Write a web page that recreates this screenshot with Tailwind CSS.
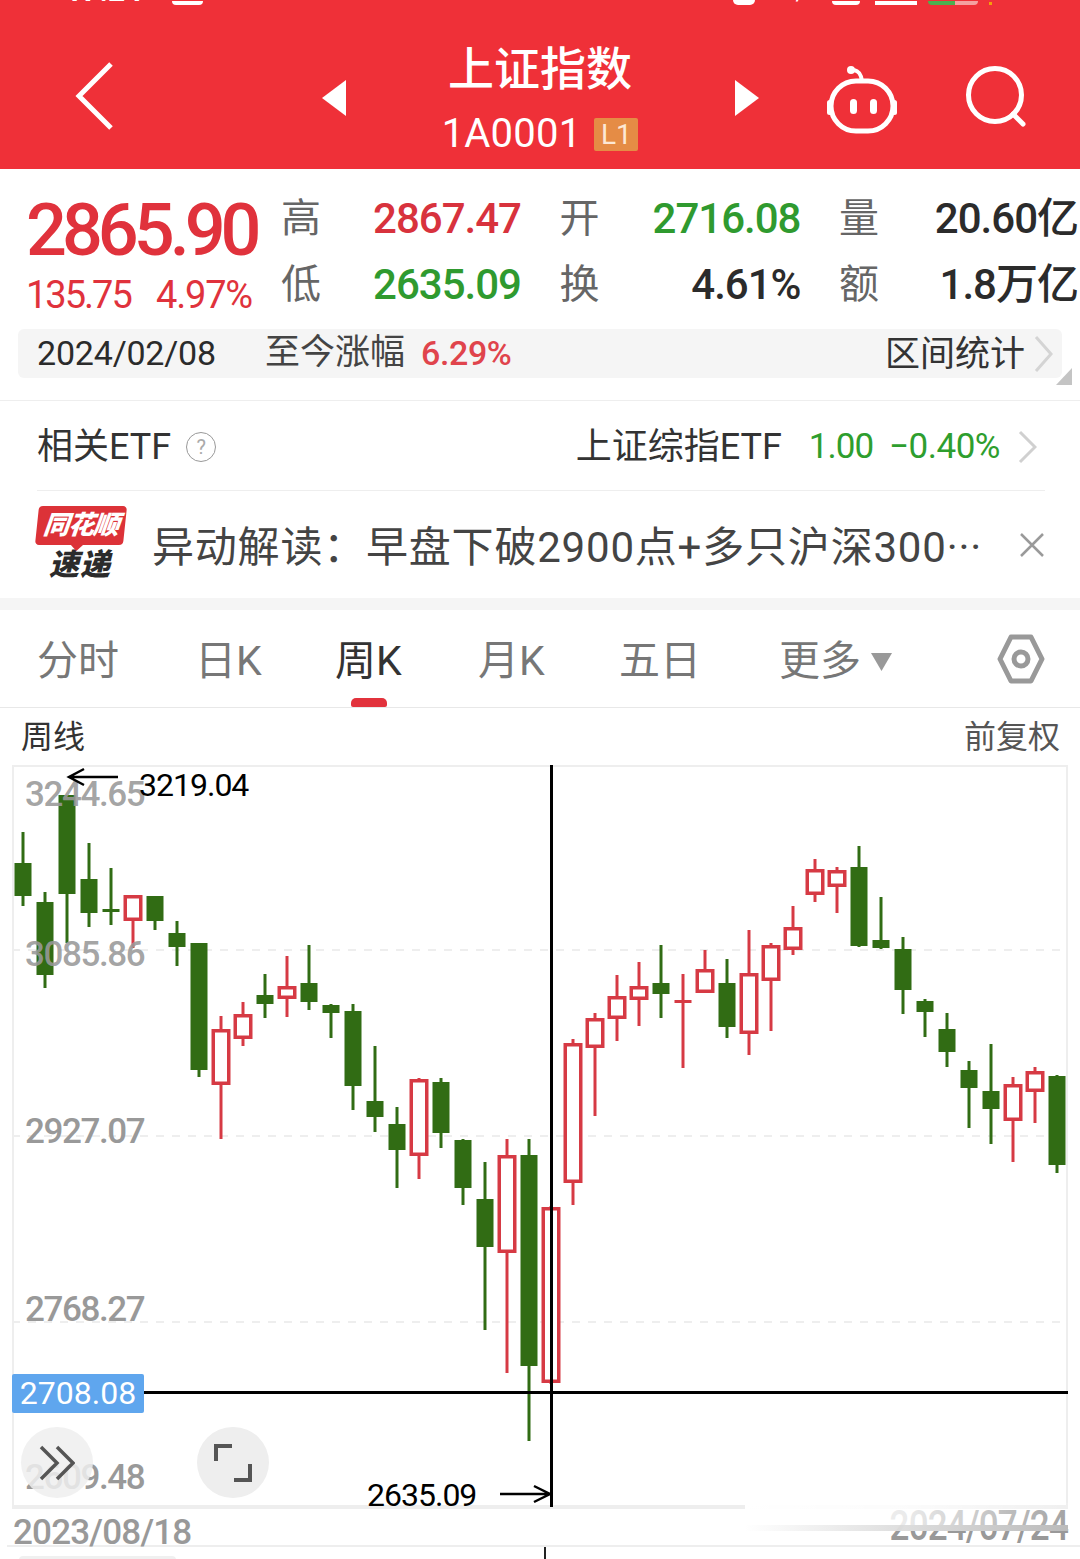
<!DOCTYPE html>
<html lang="zh-CN">
<head>
    <meta charset="UTF-8">
    <meta name="viewport" content="width=device-width, initial-scale=1.0">
    <title>上证指数</title>
    <script src="https://cdn.jsdelivr.net/npm/@tailwindcss/browser@4"></script>
</head>
<body class="bg-white font-['Roboto','Noto_Sans_CJK_SC',sans-serif] w-[1080px] h-[1559px] overflow-hidden">
    <!-- Header -->
    <header class="h-[169px] bg-[#ef3038] text-white relative overflow-hidden">
        <!-- status bar, cut off by the crop -->
        <div class="flex items-end h-[5px] overflow-hidden">
            <div class="ml-[65px] w-[100px] h-[5px] overflow-hidden"><span class="block -mt-[24px] text-[30px] leading-[30px] font-bold">17:24</span></div>
            <div class="ml-[7px] w-[31px] h-[4px] bg-white rounded-b-md"></div>
            <div class="ml-[530px] w-[22px] h-[5px] bg-white rounded-b-full"></div>
            <div class="ml-[18px] w-[44px] h-[5px] overflow-hidden"><span class="block -mt-[15px] text-[18px] leading-[18px] font-bold">KB/s</span></div>
            <div class="ml-[15px] w-[28px] h-[4px] bg-white rounded-b-md"></div>
            <div class="ml-[15px] w-[42px] h-[4px] bg-white"></div>
            <div class="ml-[11px] w-[50px] h-[4px] flex overflow-hidden rounded-b-sm"><div class="w-[27px] bg-[#4caf50]"></div><div class="flex-1 bg-[#f4a0a0]"></div></div>
            <div class="ml-[11px] w-[3px] h-[3px] bg-[#f59e0b]"></div>
        </div>
        <nav class="flex items-start h-[164px]">
            <svg class="ml-[75px] mt-[56px] shrink-0" width="40" height="72" viewBox="0 0 40 72" fill="none" stroke="white" stroke-width="5"><path d="M36 3 4 35 36 67"/></svg>
            <svg class="ml-[207px] mt-[75px] shrink-0" width="24" height="36" viewBox="0 0 24 36" fill="white"><path d="M24 0V36L0 18Z"/></svg>
            <div class="ml-[94px] w-[200px] shrink-0 flex flex-col items-center">
                <div class="text-[46px] leading-[50px] mt-[39px] font-medium">上证指数</div>
                <div class="flex items-center mt-[23px] h-[34px]">
                    <span class="text-[40px] leading-[34px] tracking-[0.2px]">1A0001</span>
                    <span class="ml-[13px] w-[44px] h-[33px] bg-[#e58c45] rounded-[2px] text-[28px] leading-[33px] text-center text-[#fde8d4]">L1</span>
                </div>
            </div>
            <svg class="ml-[95px] mt-[75px] shrink-0" width="24" height="36" viewBox="0 0 24 36" fill="white"><path d="M0 0V36L24 18Z"/></svg>
            <svg class="ml-[66px] mt-[55px] shrink-0" width="74" height="78" viewBox="0 0 74 78" fill="none" stroke="white" stroke-width="5">
                <circle cx="26" cy="10" r="4" fill="white" stroke="none"/>
                <path d="M29 10C34 11 36 14 37 21" stroke-width="4"/>
                <rect x="6" y="21" width="62" height="50" rx="25"/>
                <rect x="2" y="40" width="5" height="15" rx="2.5" fill="white" stroke="none"/>
                <rect x="67" y="40" width="5" height="15" rx="2.5" fill="white" stroke="none"/>
                <rect x="25" y="39" width="7" height="15" rx="3.5" fill="white" stroke="none"/>
                <rect x="45" y="39" width="7" height="15" rx="3.5" fill="white" stroke="none"/>
            </svg>
            <svg class="ml-[65px] mt-[59px] shrink-0" width="66" height="66" viewBox="0 0 66 66" fill="none" stroke="white" stroke-width="5"><circle cx="31" cy="31" r="26.5"/><path d="M49 50 59 60" stroke-linecap="round"/></svg>
        </nav>
    </header>

    <!-- Quote block -->
    <section class="h-[231px] relative">
        <div class="flex pt-[20px]">
            <div class="w-[281px] shrink-0 pl-[26px]">
                <div class="text-[72px] leading-[84px] font-medium tracking-[-5px] text-[#e0323c]">2865.90</div>
                <div class="flex text-[38px] leading-[44px] text-[#e0323c]">
                    <span class="w-[130px] tracking-[-2px]">135.75</span><span class="tracking-[-1.2px]">4.97%</span>
                </div>
            </div>
            <div class="grid grid-cols-[240px_241px_239px] content-start gap-x-[38.5px] gap-y-[18px] mt-[6px] w-[799px] text-[42px] leading-[48px] font-medium tracking-[-1px]">
                <div class="flex justify-between"><span class="text-[40px] font-normal tracking-normal text-[#666]">高</span><span class="text-[#d8323d]">2867.47</span></div>
                <div class="flex justify-between"><span class="text-[40px] font-normal tracking-normal text-[#666]">开</span><span class="text-[#2f9a2f]">2716.08</span></div>
                <div class="flex justify-between"><span class="text-[40px] font-normal tracking-normal text-[#666]">量</span><span class="text-[#2b2b2b]">20.60亿</span></div>
                <div class="flex justify-between"><span class="text-[40px] font-normal tracking-normal text-[#666]">低</span><span class="text-[#2f9a2f]">2635.09</span></div>
                <div class="flex justify-between"><span class="text-[40px] font-normal tracking-normal text-[#666]">换</span><span class="text-[#2b2b2b]">4.61%</span></div>
                <div class="flex justify-between"><span class="text-[40px] font-normal tracking-normal text-[#666]">额</span><span class="text-[#2b2b2b]">1.8万亿</span></div>
            </div>
        </div>
        <div class="absolute left-[18px] top-[160px] w-[1044px] h-[49px] bg-[#f5f5f5] rounded-md flex items-center">
            <span class="ml-[19px] text-[34px] tracking-[-0.2px] text-[#2b2b2b] w-[228px]">2024/02/08</span>
            <span class="text-[35px] text-[#444] w-[156px]">至今涨幅</span>
            <span class="text-[34px] font-medium tracking-[-0.4px] text-[#e0444c]">6.29%</span>
            <span class="ml-auto text-[35px] text-[#333] pt-[4px]">区间统计</span>
            <svg class="ml-[9px] mr-[9px]" width="19" height="38" viewBox="0 0 19 38" fill="none" stroke="#d4d4d4" stroke-width="3"><path d="M2 2 17 19 2 36"/></svg>
        </div>
        <svg class="absolute left-[1056px] top-[199px]" width="16" height="17" viewBox="0 0 16 17" fill="#c4c4c4"><path d="M16 0V17H0Z"/></svg>
    </section>

    <!-- Related ETF -->
    <section class="border-t border-[#eee] h-[91px] mx-0">
        <div class="flex items-center h-[90px] pt-[3px] mx-[37px] border-b border-[#eee] w-[1008px]">
            <span class="text-[36px] text-[#333]">相关ETF</span>
            <span class="ml-[15px] w-[30px] h-[30px] rounded-full border border-[#999] text-[20px] leading-[28px] text-center text-[#aaa]">?</span>
            <span class="ml-auto text-[36px] text-[#333]">上证综指ETF</span>
            <span class="ml-[27px] text-[35px] tracking-[-1px] text-[#2e9e2e]">1.00</span>
            <span class="ml-[16px] text-[35px] tracking-[-0.5px] text-[#2e9e2e]">−0.40%</span>
            <svg class="ml-[18px] mr-[8px]" width="19" height="34" viewBox="0 0 19 34" fill="none" stroke="#d0d0d0" stroke-width="3"><path d="M2 2 17 17 2 32"/></svg>
        </div>
    </section>

    <!-- News ticker -->
    <section class="h-[107px] flex items-center pl-[37px] pr-[35px]">
        <div class="w-[88px] h-[76px] shrink-0 flex flex-col items-center -mt-[1px]">
            <div class="relative w-[88px] h-[39px] bg-[#dc3238] rounded-[4px] -skew-x-6 text-white text-[26px] leading-[38px] font-black italic text-center tracking-[-1px]">
                同花顺
                <div class="absolute left-[37px] top-[33px] w-[10px] h-[10px] bg-[#dc3238] rotate-45"></div>
            </div>
            <div class="text-[30px] leading-[34px] mt-[3px] font-black italic text-[#2b2b2b] tracking-[1px] -ml-[2px]">速递</div>
        </div>
        <div class="ml-[27px] pt-[6px] text-[42px] tracking-[0.8px] text-[#444] whitespace-nowrap">异动解读：早盘下破2900点+多只沪深300···</div>
        <svg class="ml-auto" width="26" height="26" viewBox="0 0 26 26" stroke="#9a9a9a" stroke-width="2.5" fill="none"><path d="M2 2 24 24M24 2 2 24"/></svg>
    </section>
    <div class="h-[12px] bg-[#f5f5f5]"></div>

    <!-- Period tabs -->
    <nav class="h-[98px] border-b border-[#e8e8e8] flex text-[41px] leading-[103px] text-[#777] relative">
        <span class="ml-[37px] w-[158px]">分时</span>
        <span class="w-[140px]">日K</span>
        <span class="w-[143px] text-[#333] relative">周K<i class="absolute left-[16px] bottom-0 w-[36px] h-[9px] bg-[#e2323c] rounded-t-[5px] rounded-b-[2px]"></i></span>
        <span class="w-[141px]">月K</span>
        <span class="w-[160px]">五日</span>
        <span>更多</span>
        <svg class="ml-[10px] mt-[43px]" width="21" height="18" viewBox="0 0 21 18" fill="#999"><path d="M0 0H21L10.5 18Z"/></svg>
        <svg class="ml-[105px] mt-[24px]" width="48" height="50" viewBox="0 0 48 50" fill="none" stroke="#999" stroke-width="5" stroke-linejoin="round"><path d="M14 3H34L45 25 34 47H14L3 25Z"/><circle cx="24" cy="25" r="7"/></svg>
    </nav>

    <!-- Chart header -->
    <div class="h-[57px] flex items-center justify-between pl-[21px] pr-[20px] text-[32px] text-[#444]">
        <span class="text-[#333]">周线</span><span class="text-[#555]">前复权</span>
    </div>

    <!-- Candlestick chart -->
    <div id="chart" class="relative ml-[12px] w-[1056px] h-[742px]">
        <div class="absolute inset-0 border-2 border-[#eee]"></div>
        <svg id="candles" class="absolute left-0 top-0" width="1056" height="742" viewBox="12 765 1056 742">
            <g stroke="#eee" stroke-width="2" stroke-dasharray="8 8">
                <path d="M12 950H1068M12 1136H1068M12 1322H1068"/>
            </g>
        </svg>
        <!-- axis labels -->
        <span class="absolute left-[13px] top-[9px] text-[35px] leading-[42px] tracking-[-1.4px] font-medium text-[#999]/90">3244.65</span>
        <span class="absolute left-[13px] top-[169px] text-[35px] leading-[42px] tracking-[-1.4px] font-medium text-[#999]/90">3085.86</span>
        <span class="absolute left-[13px] top-[346px] text-[35px] leading-[42px] tracking-[-1.4px] font-medium text-[#999]">2927.07</span>
        <span class="absolute left-[13px] top-[524px] text-[35px] leading-[42px] tracking-[-1.4px] font-medium text-[#999]">2768.27</span>
        <span class="absolute left-[13px] top-[692px] text-[35px] leading-[42px] tracking-[-1.4px] font-medium text-[#999]">2609.48</span>
        <!-- high / low marks -->
        <span class="absolute left-[127px] top-[-1px] text-[32px] leading-[42px] tracking-[-1px] text-black">3219.04</span>
        <span class="absolute left-[355px] top-[709px] text-[32px] leading-[42px] tracking-[-1px] text-black">2635.09</span>
        <svg class="absolute left-[54px] top-[2px]" width="54" height="20" viewBox="0 0 54 20" fill="none" stroke="black" stroke-width="2.5"><path d="M52 10H3M18 2 3 10 18 18"/></svg>
        <svg class="absolute left-[487px] top-[719px]" width="54" height="20" viewBox="0 0 54 20" fill="none" stroke="black" stroke-width="2.5"><path d="M1 10H51M35 2 51 10 35 18"/></svg>
        <!-- crosshair -->
        <div class="absolute left-[538px] top-0 w-[3px] h-[742px] bg-black"></div>
        <div class="absolute left-[132px] top-[626px] w-[924px] h-[3px] bg-black"></div>
        <div class="absolute left-0 top-[609px] w-[132px] h-[39px] bg-[#5fa6ee] rounded-[2px] text-[32px] leading-[39px] text-center text-white">2708.08</div>
        <!-- chart buttons -->
        <div class="absolute left-[9px] top-[662px] w-[72px] h-[71px] rounded-full bg-[#eee]/85 flex items-center justify-center">
            <svg width="36" height="36" viewBox="0 0 36 36" fill="none" stroke="#555" stroke-width="3.5"><path d="M2 2 18 18 2 34M18 2 34 18 18 34"/></svg>
        </div>
        <div class="absolute left-[185px] top-[662px] w-[72px] h-[71px] rounded-full bg-[#eee] flex items-center justify-center">
            <svg width="38" height="38" viewBox="0 0 38 38" fill="none" stroke="#555" stroke-width="4"><path d="M2 17V2H18M20 36H36V20"/></svg>
        </div>
    </div>

    <!-- Date axis -->
    <div class="relative h-[38px] border-t-2 border-[#eee] ml-[12px] w-[1056px] flex justify-between text-[35px] leading-[48px] tracking-[-0.8px] font-medium text-[#999]">
        <span class="ml-[1px] h-[40px] relative z-10">2023/08/18</span>
        <span class="h-[40px] scale-y-120 origin-bottom -translate-y-[3px]">2024/07/24</span>
        <!-- smeared watermark left by the crop -->
        <div class="absolute left-[733px] right-0 -top-[6px] h-[22px] bg-gradient-to-r from-white via-white/80 to-white/10"></div>
        <div class="absolute left-[733px] right-0 top-[16px] h-[6px] bg-gradient-to-r from-transparent via-[#ddd] to-[#bbb]"></div>
    </div>
    <div class="relative ml-[7px] border-t-2 border-[#eee] h-[14px]">
        <div class="absolute left-[12px] top-[9px] w-[157px] h-[4px] bg-[#f0f0f0] rounded-t"></div>
        <div class="absolute left-[537px] top-0 w-[2px] h-[14px] bg-[#222]"></div>
    </div>

    <script>
        // [wickTop, wickBottom, bodyTop, bodyBottom, color]
        const weeks = [
            [832, 906, 863, 896, 'g'], [892, 988, 902, 975, 'g'], [795, 943, 795, 894, 'g'], [843, 927, 879, 913, 'g'],
            [868, 925, 909, 912, 'g'], [895, 948, 895, 921, 'r'], [896, 930, 896, 921, 'g'], [921, 966, 933, 947, 'g'],
            [943, 1077, 943, 1070, 'g'], [1016, 1139, 1029, 1085, 'r'], [1002, 1046, 1014, 1039, 'r'], [974, 1018, 995, 1004, 'g'],
            [956, 1017, 986, 999, 'r'], [945, 1010, 983, 1002, 'g'], [1004, 1038, 1005, 1013, 'g'], [1004, 1110, 1011, 1086, 'g'],
            [1046, 1132, 1101, 1117, 'g'], [1107, 1188, 1124, 1150, 'g'], [1078, 1179, 1079, 1156, 'r'], [1078, 1148, 1082, 1133, 'g'],
            [1139, 1205, 1140, 1188, 'g'], [1162, 1330, 1199, 1247, 'g'], [1139, 1373, 1155, 1253, 'r'], [1139, 1441, 1155, 1366, 'g'],
            [1206, 1384, 1207, 1383, 'r'], [1039, 1205, 1043, 1183, 'r'], [1013, 1116, 1018, 1048, 'r'], [975, 1041, 996, 1019, 'r'],
            [962, 1026, 986, 1000, 'r'], [945, 1018, 983, 994, 'g'], [974, 1068, 1000, 1003, 'r'], [950, 993, 969, 993, 'r'],
            [959, 1038, 983, 1027, 'g'], [930, 1055, 973, 1034, 'r'], [943, 1031, 945, 981, 'r'], [906, 955, 927, 950, 'r'],
            [859, 902, 869, 895, 'r'], [867, 913, 870, 887, 'r'], [846, 947, 867, 946, 'g'], [897, 949, 940, 948, 'g'],
            [937, 1014, 949, 990, 'g'], [999, 1037, 1001, 1012, 'g'], [1013, 1067, 1029, 1052, 'g'], [1061, 1128, 1070, 1088, 'g'],
            [1044, 1144, 1091, 1109, 'g'], [1077, 1162, 1084, 1121, 'r'], [1067, 1123, 1071, 1092, 'r'], [1075, 1173, 1076, 1165, 'g']
        ];
        const svg = document.getElementById('candles');
        const NS = 'http://www.w3.org/2000/svg';

        function add(tag, attrs) {
            const el = document.createElementNS(NS, tag);
            for (const k in attrs) el.setAttribute(k, attrs[k]);
            svg.appendChild(el);
        }

        weeks.forEach((w, i) => {
            const x = 23 + i * 22;
            const color = w[4] === 'g' ? '#316c14' : '#d63a44';
            add('line', { x1: x, x2: x, y1: w[0], y2: w[1], stroke: color, 'stroke-width': 3 });
            if (w[4] === 'g' || w[3] - w[2] < 5) {
                add('rect', { x: x - 8.5, y: w[2], width: 17, height: w[3] - w[2], fill: color });
            } else {
                add('rect', { x: x - 7.75, y: w[2] + 1.75, width: 15.5, height: w[3] - w[2] - 3.5, fill: 'white', stroke: color, 'stroke-width': 3.5 });
            }
        });
    </script>
</body>
</html>
